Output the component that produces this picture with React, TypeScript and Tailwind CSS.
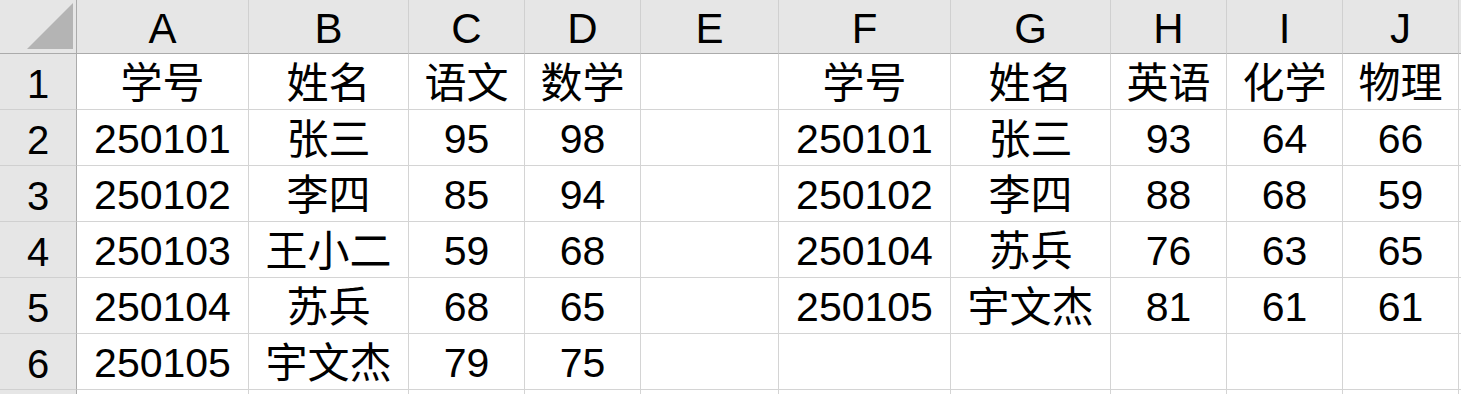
const cols = ["A", "B", "C", "D", "E", "F", "G", "H", "I", "J"];

const rows: string[][] = [
  ["学号", "姓名", "语文", "数学", "", "学号", "姓名", "英语", "化学", "物理"],
  ["250101", "张三", "95", "98", "", "250101", "张三", "93", "64", "66"],
  ["250102", "李四", "85", "94", "", "250102", "李四", "88", "68", "59"],
  ["250103", "王小二", "59", "68", "", "250104", "苏兵", "76", "63", "65"],
  ["250104", "苏兵", "68", "65", "", "250105", "宇文杰", "81", "61", "61"],
  ["250105", "宇文杰", "79", "75", "", "", "", "", "", ""],
  ["", "", "", "", "", "", "", "", "", ""],
];

const font = { fontFamily: '"Liberation Sans", "Noto Sans CJK SC", sans-serif' };

function Corner() {
  return (
    <div className="relative bg-[#e6e6e6] border-r border-b border-r-[#ababab] border-b-[#ababab]">
      <svg className="absolute left-0 top-0" width="76" height="53">
        <polygon points="27,49 73,49 73,3" fill="#b4b4b4" />
      </svg>
    </div>
  );
}

function Cell({ v }: { v: string }) {
  const cjk = /[\u4e00-\u9fff]/.test(v);
  return (
    <div
      className={
        "flex items-center justify-center pt-1 border-r border-b border-[#d4d4d4] leading-none whitespace-nowrap " +
        (cjk ? "text-[42px]" : "text-[41px]")
      }
    >
      {v}
    </div>
  );
}

export default function App() {
  return (
    <div className="w-[1461px] h-[394px] overflow-hidden bg-white text-black" style={font}>
      <div className="grid grid-cols-[77px_172px_160px_116px_116px_138px_172px_160px_116px_116px_116px_2px] grid-rows-[54px_repeat(7,56px)]">
        <Corner />
        {cols.map((c) => (
          <div
            key={c}
            className="flex items-center justify-center pt-1 bg-[#e6e6e6] border-r border-b border-r-[#d0d0d0] border-b-[#ababab] text-[42px] leading-none"
          >
            {c}
          </div>
        ))}
        <div className="bg-[#e6e6e6] border-b border-b-[#ababab]" />
        {rows.map((r, i) => (
          <>
            <div
              key={"h" + i}
              className="flex items-center justify-center pt-1 bg-[#e6e6e6] border-r border-b border-r-[#ababab] border-b-[#d0d0d0] text-[40px] leading-none"
            >
              {i < 6 ? i + 1 : ""}
            </div>
            {r.map((v, j) => (
              <Cell key={i + "-" + j} v={v} />
            ))}
            <div key={"e" + i} className="border-b border-[#d4d4d4]" />
          </>
        ))}
      </div>
    </div>
  );
}
